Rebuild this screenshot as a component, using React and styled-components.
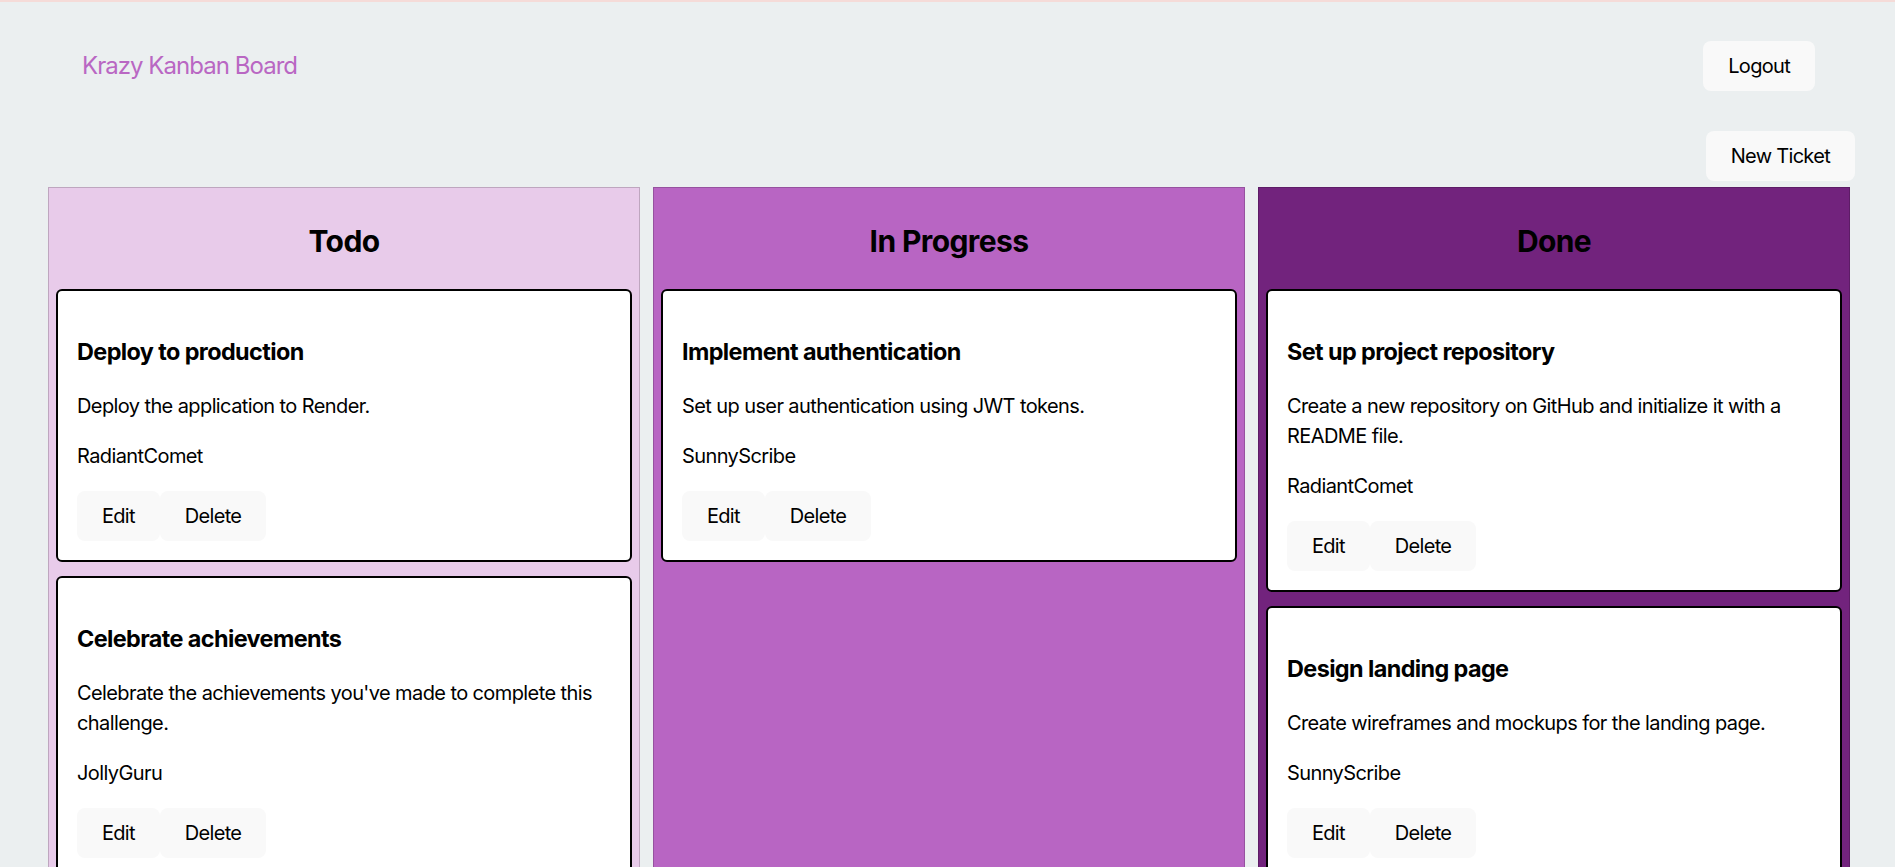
import React from "react";
import styled, { createGlobalStyle } from "styled-components";

const GlobalStyle = createGlobalStyle`
  * {
    box-sizing: border-box;
  }

  body {
    margin: 0;
    border-top: 2px solid #f5dbd8;
    background: #ebeff0;
    color: #000;
    font-family: Inter, "Noto Sans", sans-serif;
    font-size: 20px;
    line-height: 1.5;
    letter-spacing: -0.03em;
  }
`;

const columns = [
  {
    title: "Todo",
    bg: "#e8cbea",
    tickets: [
      {
        name: "Deploy to production",
        description: "Deploy the application to Render.",
        user: "RadiantComet",
      },
      {
        name: "Celebrate achievements",
        description:
          "Celebrate the achievements you've made to complete this challenge.",
        user: "JollyGuru",
      },
    ],
  },
  {
    title: "In Progress",
    bg: "#b865c3",
    tickets: [
      {
        name: "Implement authentication",
        description: "Set up user authentication using JWT tokens.",
        user: "SunnyScribe",
      },
    ],
  },
  {
    title: "Done",
    bg: "#72237d",
    tickets: [
      {
        name: "Set up project repository",
        description:
          "Create a new repository on GitHub and initialize it with a README file.",
        user: "RadiantComet",
      },
      {
        name: "Design landing page",
        description: "Create wireframes and mockups for the landing page.",
        user: "SunnyScribe",
      },
    ],
  },
];

const Ticket = ({ name, description, user }) => (
  <StyledCard>
    <StyledCardTitle>{name}</StyledCardTitle>
    <StyledText>{description}</StyledText>
    <StyledText>{user}</StyledText>
    <ButtonRow>
      <Button>Edit</Button>
      <Button>Delete</Button>
    </ButtonRow>
  </StyledCard>
);

const App = () => {
  return (
    <>
      <GlobalStyle />
      <Navbar>
        <Brand href="#">Krazy Kanban Board</Brand>
        <Button>Logout</Button>
      </Navbar>
      <Toolbar>
        <Button>New Ticket</Button>
      </Toolbar>
      <Board>
        {columns.map((col) => (
          <Column key={col.title} bg={col.bg}>
            <ColumnTitle>{col.title}</ColumnTitle>
            {col.tickets.map((t) => (
              <Ticket key={t.name} {...t} />
            ))}
          </Column>
        ))}
      </Board>
    </>
  );
};

//===== Styles
const Navbar = styled.nav`
  display: flex;
  align-items: center;
  justify-content: space-between;
  padding: 39px 80px 0 82px;
`;

const Brand = styled.a`
  color: #b967c3;
  font-size: 24px;
  letter-spacing: -0.04em;
  text-decoration: none;
`;

const Button = styled.button`
  border: 1px solid transparent;
  border-radius: 8px;
  padding: 12px 24px;
  background: #f9f9f9;
  color: #000;
  font-family: inherit;
  font-size: 20px;
  line-height: normal;
  letter-spacing: -0.035em;
  cursor: pointer;
`;

const Toolbar = styled.div`
  display: flex;
  justify-content: flex-end;
  padding: 40px 40px 0 0;
`;

const Board = styled.main`
  display: grid;
  grid-template-columns: repeat(3, 1fr);
  column-gap: 13px;
  margin: 6px 45px 0 48px;
`;

const Column = styled.section`
  display: flex;
  flex-direction: column;
  gap: 14px;
  padding: 0 7px 7px;
  border: 1px solid rgba(0, 0, 0, 0.18);
  background: ${(props) => props.bg};
`;

const ColumnTitle = styled.h2`
  margin: 31px 0 11px;
  font-size: 30px;
  line-height: 45px;
  text-align: center;
`;

const StyledCard = styled.article`
  padding: 0 19px 19px;
  border: 2px solid #000;
  border-radius: 6px;
  background: #fff;
`;

const StyledCardTitle = styled.h3`
  margin: 43px 0 22px;
  font-size: 23.4px;
  line-height: 35px;
`;

const StyledText = styled.p`
  margin: 0 0 20px;
  font-size: 20px;
  line-height: 30px;
`;

const ButtonRow = styled.div`
  display: flex;
`;

export default App;
